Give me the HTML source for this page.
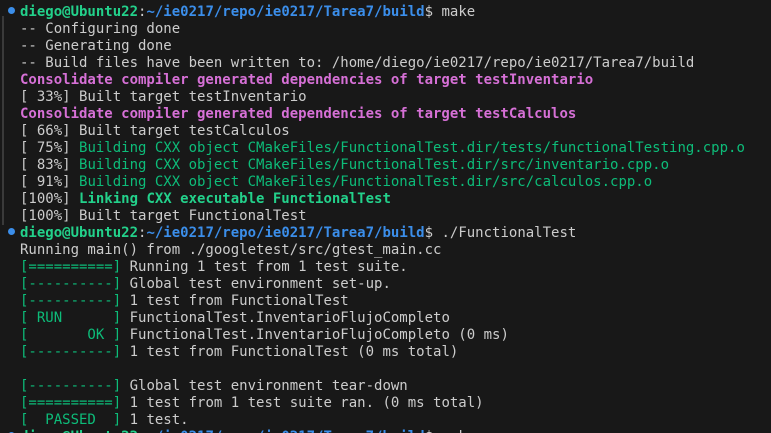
<!DOCTYPE html><html><head><style>
html,body{margin:0;width:771px;height:433px;overflow:hidden;background:#181818}
body{position:relative}
pre{margin:0;position:absolute;left:20px;top:4px;font:14px/17px "DejaVu Sans Mono","Liberation Mono",monospace;color:#cccccc}
.g{color:#23d18b;font-weight:bold}.b{color:#3b8eea;font-weight:bold}.m{color:#d670d6;font-weight:bold}.c{color:#0dbc79}.gb{color:#23d18b;font-weight:bold}
.dot{position:absolute;left:8px;width:7px;height:7px;border-radius:50%;background:#3b8eea}
.bar{position:absolute;left:2px;top:16px;width:2px;height:209px;background:#3a3a3a}
</style></head><body>
<div class="bar"></div>
<div class="dot" style="top:7px"></div>
<div class="dot" style="top:228px"></div>
<div class="dot" style="top:432px"></div>
<pre><span class="g">diego@Ubuntu22</span>:<span class="b">~/ie0217/repo/ie0217/Tarea7/build</span>$ make
-- Configuring done
-- Generating done
-- Build files have been written to: /home/diego/ie0217/repo/ie0217/Tarea7/build
<span class="m">Consolidate compiler generated dependencies of target testInventario</span>
[ 33%] Built target testInventario
<span class="m">Consolidate compiler generated dependencies of target testCalculos</span>
[ 66%] Built target testCalculos
[ 75%] <span class="c">Building CXX object CMakeFiles/FunctionalTest.dir/tests/functionalTesting.cpp.o</span>
[ 83%] <span class="c">Building CXX object CMakeFiles/FunctionalTest.dir/src/inventario.cpp.o</span>
[ 91%] <span class="c">Building CXX object CMakeFiles/FunctionalTest.dir/src/calculos.cpp.o</span>
[100%] <span class="gb">Linking CXX executable FunctionalTest</span>
[100%] Built target FunctionalTest
<span class="g">diego@Ubuntu22</span>:<span class="b">~/ie0217/repo/ie0217/Tarea7/build</span>$ ./FunctionalTest
Running main() from ./googletest/src/gtest_main.cc
<span class="c">[==========]</span> Running 1 test from 1 test suite.
<span class="c">[----------]</span> Global test environment set-up.
<span class="c">[----------]</span> 1 test from FunctionalTest
<span class="c">[ RUN      ]</span> FunctionalTest.InventarioFlujoCompleto
<span class="c">[       OK ]</span> FunctionalTest.InventarioFlujoCompleto (0 ms)
<span class="c">[----------]</span> 1 test from FunctionalTest (0 ms total)

<span class="c">[----------]</span> Global test environment tear-down
<span class="c">[==========]</span> 1 test from 1 test suite ran. (0 ms total)
<span class="c">[  PASSED  ]</span> 1 test.
<span class="g">diego@Ubuntu22</span>:<span class="b">~/ie0217/repo/ie0217/Tarea7/build</span>$ make
</pre>
</body></html>
